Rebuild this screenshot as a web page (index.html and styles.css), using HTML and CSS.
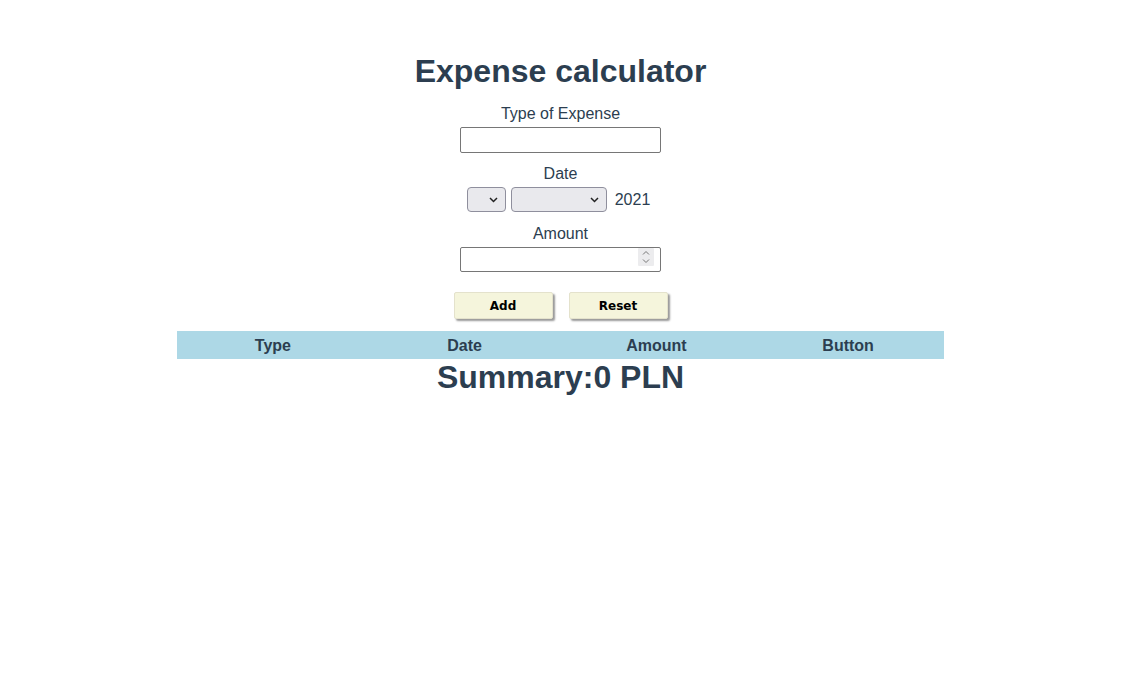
FILE: index.html
```html
<!DOCTYPE html>
<html lang="en">
<head>
<meta charset="utf-8">
<title>Expense calculator</title>
<link rel="stylesheet" href="styles.css">
</head>
<body>
<div class="app">
  <h1 class="title">Expense calculator</h1>
  <form class="form">
    <label class="label" for="type">Type of Expense</label>
    <input class="field" id="type" type="text">
    <label class="label label-gap">Date</label>
    <div class="date-row">
      <span class="select-wrap">
        <select class="select select-day"><option></option><option>31</option></select>
        <svg class="chev" width="9" height="6" viewBox="0 0 9 6"><path d="M1 1 L4.5 4.5 L8 1" fill="none" stroke="#222" stroke-width="1.5"/></svg>
      </span>
      <span class="select-wrap">
        <select class="select select-month"><option></option><option>September</option></select>
        <svg class="chev" width="9" height="6" viewBox="0 0 9 6"><path d="M1 1 L4.5 4.5 L8 1" fill="none" stroke="#222" stroke-width="1.5"/></svg>
      </span>
      <span class="year">2021</span>
    </div>
    <label class="label label-gap label-amount" for="amount">Amount</label>
    <span class="amount-wrap">
      <input class="field" id="amount" type="text">
      <span class="spin">
        <svg width="16" height="18" viewBox="0 0 16 18"><path d="M5 6.5 L8 3.5 L11 6.5" fill="none" stroke="#777" stroke-width="1"/><path d="M5 11.5 L8 14.5 L11 11.5" fill="none" stroke="#777" stroke-width="1"/></svg>
      </span>
    </span>
    <div class="buttons">
      <button type="button" class="btn">Add</button>
      <button type="button" class="btn">Reset</button>
    </div>
  </form>
  <table class="table">
    <thead>
      <tr><th>Type</th><th>Date</th><th>Amount</th><th>Button</th></tr>
    </thead>
  </table>
  <h1 class="summary">Summary:0 PLN</h1>
</div>
</body>
</html>
```

FILE: styles.css
```css
html, body {
  margin: 0;
  padding: 0;
  background: #ffffff;
}

.app {
  width: 1121px;
  padding-top: 53px;
  font-family: "Liberation Sans", Arial, sans-serif;
  color: #2c3e50;
  text-align: center;
  display: flex;
  flex-direction: column;
  align-items: center;
}

.title {
  margin: 0;
  font-size: 32px;
  line-height: 37px;
  font-weight: bold;
}

.form {
  display: flex;
  flex-direction: column;
  align-items: center;
  margin-top: 15px;
}

.label {
  display: block;
  font-size: 16px;
  line-height: 18px;
  margin-bottom: 4px;
}

.label-gap {
  margin-top: 12px;
}

.label-amount {
  margin-top: 13px;
}

.field {
  box-sizing: border-box;
  width: 201px;
  height: 26px;
  margin: 0;
  border: 1px solid #767676;
  border-radius: 2px;
  background: #fff;
  font-family: "Liberation Sans", Arial, sans-serif;
  font-size: 13px;
  padding: 1px 3px;
}

.date-row {
  display: flex;
  align-items: center;
  height: 25px;
  padding-right: 4px;
}

.select-wrap {
  position: relative;
  display: inline-block;
  height: 25px;
}

.select {
  -webkit-appearance: none;
  appearance: none;
  box-sizing: border-box;
  height: 25px;
  margin: 0;
  border: 1px solid #8f8f9d;
  border-radius: 4px;
  background: #e9e9ed;
  font-family: "Liberation Sans", Arial, sans-serif;
  font-size: 13px;
  color: transparent;
  display: block;
}

.select-day {
  width: 39px;
}

.select-month {
  width: 96px;
  margin-left: 5px;
}

.chev {
  position: absolute;
  right: 8px;
  top: 10px;
}

.year {
  margin-left: 8px;
  font-size: 16px;
  line-height: 18px;
}

.amount-wrap {
  position: relative;
  display: block;
  height: 25px;
}

.amount-wrap .field {
  height: 25px;
}

.spin {
  position: absolute;
  left: 178px;
  top: 1px;
  width: 16px;
  height: 18px;
  background: #ececee;
  border-radius: 1px;
}

.spin svg {
  display: block;
}

.buttons {
  display: flex;
  gap: 16px;
  margin-top: 20px;
}

.btn {
  box-sizing: border-box;
  width: 99px;
  height: 27px;
  margin: 0;
  border: 1px solid #e4e2cc;
  border-radius: 2px;
  background: #f5f5dc;
  box-shadow: 2px 2px 2px #999;
  font-family: "DejaVu Sans", Verdana, sans-serif;
  font-weight: bold;
  font-size: 12px;
  color: #000;
  padding: 0;
}

.table {
  width: 767px;
  margin-top: 12px;
  border-collapse: collapse;
  border-spacing: 0;
  table-layout: fixed;
}

.table th {
  height: 28px;
  padding: 1px 0 0;
  box-sizing: border-box;
  background: #add8e6;
  font-size: 16px;
  font-weight: bold;
  color: #2c3e50;
  text-align: center;
  vertical-align: middle;
}

.summary {
  margin: 0;
  font-size: 32px;
  line-height: 37px;
  font-weight: bold;
}
```
